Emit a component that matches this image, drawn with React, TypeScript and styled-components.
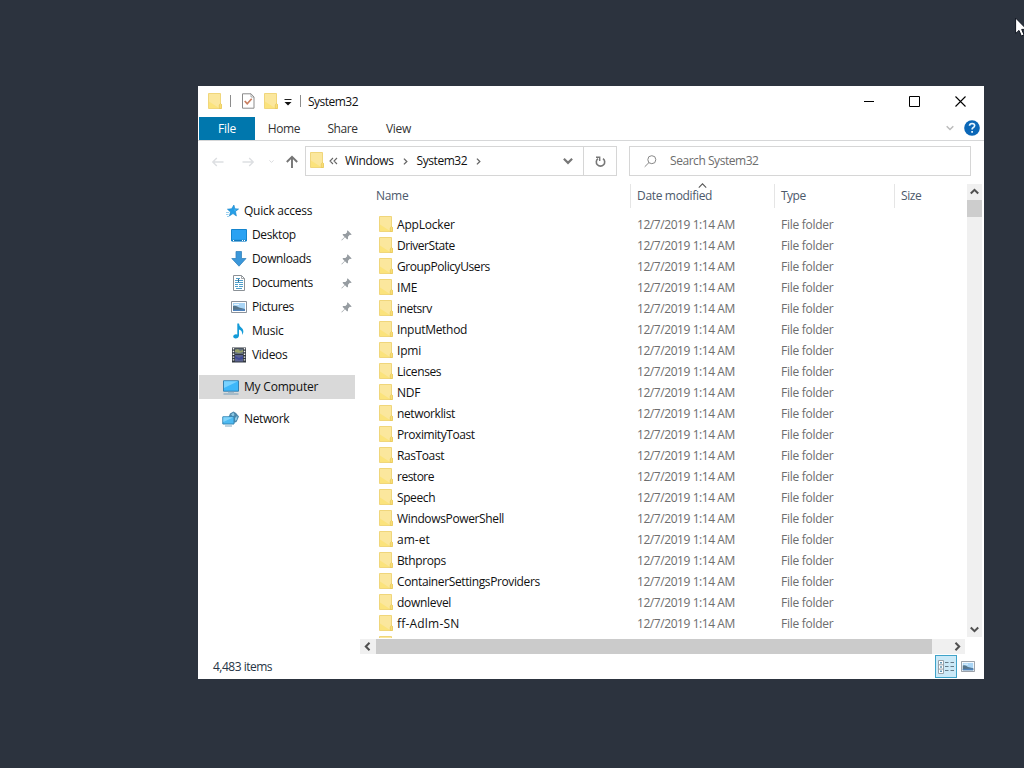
import React from "react";
import styled, { createGlobalStyle } from "styled-components";

const GlobalStyle = createGlobalStyle`
  * { box-sizing: border-box; }
  body { margin: 0; background: #2c333e; }
  svg { display: block; flex: none; }
`;

const Desktop = styled.main`
  position: relative;
  width: 1024px;
  height: 768px;
  padding: 86px 40px 89px 198px;
  overflow: hidden;
  background: #2c333e;
  font: 12px/16px "Open Sans", "Noto Sans", sans-serif;
  color: #111;
  cursor: default;
`;

const Window = styled.section`
  height: 593px;
  display: flex;
  flex-direction: column;
  background: #fff;
`;

const Label = styled.span<{ $track?: number }>`
  white-space: pre;
  letter-spacing: ${(p) => p.$track ?? -0.2}px;
`;

const TitleBar = styled.header`
  height: 31px;
  display: flex;
  align-items: center;
  padding-left: 10px;
`;

const QuickTools = styled.div`
  display: flex;
  align-items: center;
  width: 100px;
  height: 30px;
  align-self: flex-start;
`;

const Separator = styled.i<{ $before: number; $after: number }>`
  width: 1px;
  height: 12px;
  margin: 0 ${(p) => p.$after}px 0 ${(p) => p.$before}px;
  background: #8c8c8c;
`;

const WindowControls = styled.div`
  display: flex;
  margin-left: auto;
`;

const ControlButton = styled.button<{ $width: number }>`
  width: ${(p) => p.$width}px;
  height: 31px;
  display: flex;
  align-items: center;
  padding: 0 0 0 17px;
  border: 0;
  background: none;
`;

const TabBar = styled.nav`
  height: 24px;
  display: flex;
  padding: 0 0 0 1px;
  border-bottom: 1px solid #d6d7d8;
  color: #333;
`;

const Tab = styled.div<{ $width: number; $active?: boolean }>`
  width: ${(p) => p.$width}px;
  display: flex;
  align-items: center;
  justify-content: center;
  padding-top: 1px;
  background: ${(p) => (p.$active ? "#0077ad" : "transparent")};
  color: ${(p) => (p.$active ? "#fff" : "#333")};
`;

const TabTools = styled.div`
  height: 22px;
  margin-left: auto;
  display: flex;
  align-items: center;
  gap: 10px;
  padding-right: 4px;
`;

const NavigationBar = styled.div`
  height: 41px;
  display: flex;
  align-items: flex-start;
  padding: 5px 13px 0 0;
`;

const HistoryButtons = styled.div`
  width: 107px;
  height: 31px;
  display: flex;
  align-items: center;
  padding-left: 13px;
`;

const Address = styled.div`
  width: 312px;
  height: 30px;
  display: flex;
  align-items: center;
  border: 1px solid #d6d6d6;
  padding-left: 4px;
`;

const Crumbs = styled.div`
  flex: 1;
  display: flex;
  align-items: center;
`;

const AddressFolder = styled.span`
  margin-top: -2px;
`;

const Gap = styled.span<{ $size: number }>`
  flex: none;
  width: ${(p) => p.$size}px;
`;

const Refresh = styled.div`
  width: 33px;
  height: 28px;
  display: grid;
  place-items: center;
  border-left: 1px solid #d6d6d6;
`;

const Search = styled.div`
  width: 342px;
  height: 30px;
  display: flex;
  align-items: center;
  gap: 13px;
  margin-left: 12px;
  padding-left: 14px;
  border: 1px solid #d6d6d6;
  color: #6d6d6d;
`;

const Body = styled.div`
  height: 472px;
  display: flex;
`;

const Sidebar = styled.aside`
  width: 162px;
  padding: 17px 5px 0 1px;
`;

const SideRow = styled.div<{ $indent: number; $selected?: boolean; $space?: number }>`
  height: 24px;
  display: flex;
  align-items: center;
  margin-top: ${(p) => p.$space ?? 0}px;
  padding-left: ${(p) => p.$indent}px;
  background: ${(p) => (p.$selected ? "#d9d9d9" : "transparent")};
`;

const SideIcon = styled.span<{ $width: number }>`
  width: ${(p) => p.$width}px;
`;

const PinSlot = styled.span`
  margin-left: auto;
  padding-right: 3px;
`;

const Content = styled.section`
  width: 624px;
  height: 472px;
  display: flex;
  flex-direction: column;
`;

const ListArea = styled.div`
  height: 457px;
  display: flex;
`;

const FileList = styled.div`
  width: 607px;
  height: 456px;
  overflow: hidden;
`;

const columns = "270px 144px 120px 73px";

const ColumnHeader = styled.div`
  height: 32px;
  display: grid;
  grid-template-columns: ${columns};
  padding: 2px 0 6px;
  color: #4c596b;
`;

const ColumnTitle = styled.div<{ $first?: boolean }>`
  position: relative;
  display: flex;
  align-items: center;
  padding-left: ${(p) => (p.$first ? 16 : 6)}px;
  border-left: ${(p) => (p.$first ? "0" : "1px solid #e5e5e5")};
`;

const SortMark = styled.span`
  position: absolute;
  left: 67px;
  top: -3px;
`;

const FileRow = styled.div`
  height: 21px;
  display: grid;
  grid-template-columns: ${columns};
  align-items: center;
  color: #6d6d6d;
`;

const FileName = styled.div`
  display: flex;
  align-items: center;
  gap: 4px;
  padding-left: 19px;
  color: #111;

  svg {
    margin-top: -1px;
  }
`;

const Cell = styled.div`
  padding-left: 7px;
`;

const VerticalScroll = styled.div`
  width: 15px;
  height: 453px;
  margin-top: 2px;
  display: flex;
  flex-direction: column;
  align-items: center;
  justify-content: space-between;
  background: #f0f0f0;
`;

const ScrollArrow = styled.div`
  width: 15px;
  height: 15px;
  display: grid;
  place-items: center;
`;

const VerticalThumb = styled.div`
  width: 15px;
  height: 17px;
  margin-top: 1px;
  margin-bottom: auto;
  background: #cdcdcd;
`;

const HorizontalScroll = styled.div`
  width: 605px;
  height: 15px;
  display: flex;
  background: #f0f0f0;
`;

const HorizontalThumb = styled.div`
  width: 556px;
  margin: 0 auto 0 1px;
  background: #cbcbcb;
`;

const StatusBar = styled.footer`
  height: 25px;
  display: flex;
  align-items: center;
  padding-left: 15px;
  color: #263445;
`;

const Views = styled.div`
  display: flex;
  align-items: center;
  gap: 4px;
  margin-left: auto;
  padding-right: 9px;
`;

const ViewButton = styled.div`
  width: 22px;
  height: 23px;
  display: grid;
  place-items: center;
  border: 1px solid #3fa3c9;
  background: #cbe9f7;
`;

const Pointer = styled.div`
  position: absolute;
  left: 1015px;
  top: 17px;
`;

const FolderIcon = () => (
  <svg width="14" height="16" viewBox="0 0 14 16">
    <path d="M.5 .5H12.5V10.5L13.3 11.3V15.5H.5Z" fill="#fbe79d" stroke="#f0d67b" />
    <path d="M1 15V8.5L11 15Z" fill="#fbe37c" />
    <path d="M11.3 15.5V12L12.5 10.4L13.4 11.4V15.5Z" fill="#fbe078" stroke="#e5c658" strokeWidth=".7" />
  </svg>
);

const Chevron = ({ dir, size = 8, color = "#555", weight = 1.5 }: { dir: "up" | "down" | "left" | "right"; size?: number; color?: string; weight?: number }) => {
  const turn = { down: 0, left: 90, up: 180, right: 270 }[dir];
  return (
    <svg width={size} height={size} viewBox="0 0 8 8">
      <path d="M.7 2.2L4 5.5L7.3 2.2" transform={`rotate(${turn} 4 4)`} fill="none" stroke={color} strokeWidth={weight} />
    </svg>
  );
};

const Arrow = ({ flip }: { flip?: boolean }) => (
  <svg width="14" height="12" viewBox="0 0 14 12">
    <path d="M1.8 6H12.5M5.8 2L1.8 6L5.8 10" transform={flip ? "rotate(180 7 6)" : undefined} fill="none" stroke="#dddfe2" strokeWidth="1.4" />
  </svg>
);

const PictureIcon = ({ width = 16, height = 12 }: { width?: number; height?: number }) => (
  <svg width={width} height={height} viewBox="0 0 16 12" preserveAspectRatio="none">
    <path d="M.5 .5H15.5V11.5H.5Z" fill="#fff" stroke="#8b929b" />
    <path d="M2 2H14V10H2Z" fill="#a9d5f6" />
    <path d="M2 5Q5 4 8 6.5L14 8V10H2Z" fill="#56758a" />
    <path d="M2 8.8L14 8.3V10H2Z" fill="#4f83bd" />
    <path d="M3 3.5H8" stroke="#e9f6ff" />
  </svg>
);

const PinIcon = () => (
  <svg width="11" height="11" viewBox="0 0 11 11">
    <path d="M6.6 .3L10.7 4.4L9.6 5L8.8 4.8L7 6.7L7 8.8L6.2 9.5L4 7.2L.8 10.5L.4 10.1L3.6 6.9L1.5 4.8L2.2 4L4.4 4L6.2 2.2L6 1.2Z" fill="#969ca1" />
  </svg>
);

const SidebarGlyph = ({ name }: { name: string }) => {
  switch (name) {
    case "Quick access":
      return (
        <svg width="14" height="14" viewBox="0 0 14 14">
          <path d="M7.9 1L8.9 4.8L12.6 5L9.5 7.4L10.4 12L7 9.6L3.4 12L4.5 8L1.4 5.2L5.6 4.7Z" fill="#249ee7" stroke="#1783c6" strokeWidth=".6" />
          <path d="M0 8.5H3M0 10.5H2.5M1 12.5H3" stroke="#7fc3ea" strokeWidth=".8" />
          <path d="M7.6 2.8L8.4 5.4L11 5.7L8.6 7" fill="#56bdf4" />
        </svg>
      );
    case "Desktop":
      return (
        <svg width="16" height="13" viewBox="0 0 16 13">
          <path d="M.5 .5H15.5V12H.5Z" fill="#2aa2f3" stroke="#1484cd" />
          <path d="M1 11.5H15" stroke="#1279bd" strokeWidth="1.4" />
          <path d="M2 11.5H3M11 11.5H12M13 11.5H14" stroke="#fff" />
        </svg>
      );
    case "Downloads":
      return (
        <svg width="16" height="16" viewBox="0 0 16 16">
          <path d="M5 .5H10.5V7.5H15L8 15.2L.8 7.5H5Z" fill="#3a97da" stroke="#3784bd" strokeWidth=".8" />
        </svg>
      );
    case "Documents":
      return (
        <svg width="16" height="16" viewBox="0 0 16 16">
          <path d="M2.5 .5H10.5L13.5 3.5V15.5H2.5Z" fill="#fff" stroke="#8b9196" />
          <path d="M10.5 .5V3.5H13.5" fill="none" stroke="#8b9196" strokeWidth=".8" />
          <path d="M5 3.5H9M4 5.5H7M8 5.5H12M4 7.5H12M4 9.5H7M8 9.5H12M4 11.5H7M8 11.5H12M5 13.5H11" stroke="#4f9fca" />
          <path d="M7.5 4V7" stroke="#3c6e8f" />
        </svg>
      );
    case "Pictures":
      return <PictureIcon />;
    case "Music":
      return (
        <svg width="16" height="16" viewBox="0 0 16 16">
          <path d="M6.3 .5H8Q8.2 3 10.2 4.5Q14 7.5 11.2 12Q11.5 7.4 8 6.5V12.5Q7.7 15.6 4.2 15.5Q1.8 15 2.3 12.8Q3.4 10.5 6.3 11.4Z" fill="#149bd8" />
        </svg>
      );
    case "Videos":
      return (
        <svg width="16" height="16" viewBox="0 0 16 16">
          <path d="M1 .5H15V15.5H1Z" fill="#333940" />
          <path d="M4 1.5H12V7H4Z" fill="#65717e" /><path d="M4 8H12V14.5H4Z" fill="#5a6291" />
          <path d="M4 3L7 2L9 4L12 3V5L8 6L4 5Z" fill="#97a269" />
          <path d="M4 9L8 11L12 9V12L8 13L4 11Z" fill="#3f4a98" />
          <path d="M2.5 1V15M13.5 1V15" stroke="#f4f4f4" strokeWidth="1.5" strokeDasharray="1.4 1.4" />
        </svg>
      );
    case "My Computer":
      return (
        <svg width="18" height="15" viewBox="0 0 18 15">
          <path d="M1.5 .8H16.5V11.2H1.5Z" fill="#3db7fa" stroke="#3581b1" />
          <path d="M2 1.3H16L2 8Z" fill="#79d2ff" />
          <path d="M6 12H12M1.5 14H16.5" stroke="#729cb8" />
        </svg>
      );
    default:
      return (
        <svg width="18" height="16" viewBox="0 0 18 16">
          <path d="M11.5 .5L14 2L17 5.5L14.5 11L11.5 12L6.5 6L8 2.5Z" fill="#4c87aa" />
          <path d="M9 3.5L11.5 1.5L12.5 4L11 5.5M13 7L15.5 4.5L15 8.5L13 10Z" fill="#8bc8e4" />
          <path d="M.8 5.8H12V13H.8Z" fill="#4dbaf2" stroke="#3586b4" />
          <path d="M1.3 6.3H11.5L1.3 11Z" fill="#83d4fa" />
          <path d="M3 15H10" stroke="#82a9bf" />
        </svg>
      );
  }
};

interface SideItem { name: string; pinned?: boolean; root?: boolean; selected?: boolean; space?: number; track?: number }
const sideItems: SideItem[] = [
  { name: "Quick access", root: true, track: -0.26 },
  { name: "Desktop", pinned: true, track: -0.35 },
  { name: "Downloads", pinned: true, track: -0.38 },
  { name: "Documents", pinned: true, track: -0.38 },
  { name: "Pictures", pinned: true, track: -0.38 },
  { name: "Music" },
  { name: "Videos", track: -0.3 },
  { name: "My Computer", root: true, selected: true, space: 8 },
  { name: "Network", root: true, space: 8, track: -0.38 },
];

const files: { name: string; track?: number }[] = [
  { name: "AppLocker", track: -0.2 },
  { name: "DriverState", track: -0.45 },
  { name: "GroupPolicyUsers", track: -0.42 },
  { name: "IME" },
  { name: "inetsrv", track: -0.45 },
  { name: "InputMethod", track: -0.3 },
  { name: "Ipmi" },
  { name: "Licenses", track: -0.4 },
  { name: "NDF" },
  { name: "networklist", track: -0.38 },
  { name: "ProximityToast", track: -0.42 },
  { name: "RasToast", track: -0.4 },
  { name: "restore", track: -0.5 },
  { name: "Speech", track: -0.4 },
  { name: "WindowsPowerShell", track: -0.36 },
  { name: "am-et", track: 0 },
  { name: "Bthprops", track: -0.4 },
  { name: "ContainerSettingsProviders", track: -0.38 },
  { name: "downlevel", track: -0.3 },
  { name: "ff-Adlm-SN", track: 0.2 },
];

export default function App() {
  return (
    <>
      <GlobalStyle />
      <Desktop>
        <Window>
          <TitleBar>
            <QuickTools>
              <FolderIcon />
              <Separator $before={8} $after={10} />
              <svg width="14" height="16" viewBox="0 0 14 16">
                <path d="M1.5 .8H10L13 4V15.2H1.5Z" fill="#fff" stroke="#8b8b8b" />
                <path d="M10 .8V4H13" fill="none" stroke="#8b8b8b" strokeWidth=".7" />
                <path d="M3.7 8L6.2 10.7L10.7 5.7" fill="none" stroke="#c97f61" strokeWidth="1.7" />
              </svg>
              <Gap $size={9} />
              <FolderIcon />
              <Gap $size={6} />
              <svg width="8" height="10" viewBox="0 0 8 10"><path d="M.5 3.5H7.5" stroke="#222" /><path d="M.5 6H7.5L4 9.5Z" fill="#111" /></svg>
              <Separator $before={8} $after={7} />
            </QuickTools>
            <Label $track={-0.52}>System32</Label>
            <WindowControls>
              <ControlButton $width={45} aria-label="Minimize"><svg width="11" height="11"><path d="M0 5.5H10" stroke="#000" /></svg></ControlButton>
              <ControlButton $width={46} aria-label="Maximize"><svg width="11" height="11"><path d="M.5 .5H10.5V10.5H.5Z" fill="none" stroke="#000" /></svg></ControlButton>
              <ControlButton $width={46} aria-label="Close"><svg width="11" height="11"><path d="M.5 .5L10.5 10.5M10.5 .5L.5 10.5" stroke="#000" strokeWidth="1.1" /></svg></ControlButton>
            </WindowControls>
          </TitleBar>
          <TabBar>
            <Tab $width={56} $active><Label>File</Label></Tab>
            <Tab $width={58}><Label $track={-0.4}>Home</Label></Tab>
            <Tab $width={59}><Label $track={-0.45}>Share</Label></Tab>
            <Tab $width={53}><Label $track={-0.25}>View</Label></Tab>
            <TabTools>
              <Chevron dir="down" color="#bbb" />
              <svg width="16" height="16" viewBox="0 0 16 16">
                <circle cx="8" cy="8" r="7.8" fill="#0b67b7" />
                <path d="M5.5 5.8Q5.7 3.5 8.1 3.5Q10.7 3.6 10.6 5.8Q10.5 7 9 7.8Q8.1 8.3 8.1 9.6" fill="none" stroke="#e8f6ff" strokeWidth="1.7" />
                <path d="M7.2 11H9V12.8H7.2Z" fill="#e8f6ff" />
              </svg>
            </TabTools>
          </TabBar>
          <NavigationBar>
            <HistoryButtons>
              <Arrow />
              <Gap $size={16} />
              <Arrow flip />
              <Gap $size={14} />
              <Chevron dir="down" size={5} color="#d7d9dc" />
              <Gap $size={11} />
              <svg width="14" height="13" viewBox="0 0 14 13"><path d="M7 13V1.8M1.8 7L7 1.8L12.2 7" fill="none" stroke="#757575" strokeWidth="1.9" /></svg>
            </HistoryButtons>
            <Address>
              <Crumbs>
                <AddressFolder><FolderIcon /></AddressFolder>
                <Gap $size={5} />
                <svg width="9" height="8" viewBox="0 0 9 8"><path d="M4 1L1 4L4 7M8 1L5 4L8 7" fill="none" stroke="#666" strokeWidth="1.1" /></svg>
                <Gap $size={7} />
                <Label $track={-0.35}>Windows</Label>
                <Gap $size={8} />
                <Chevron dir="right" size={7} color="#666" />
                <Gap $size={8} />
                <Label $track={-0.45}>System32</Label>
                <Gap $size={8} />
                <Chevron dir="right" size={7} color="#666" />
              </Crumbs>
              <Chevron dir="down" size={10} color="#777" weight={1.7} />
              <Gap $size={10} />
              <Refresh>
                <svg width="12" height="13" viewBox="0 0 12 13">
                  <path d="M8.5 3.1A4.2 4.2 0 1 1 3.5 3.1" transform="translate(.5 .5)" fill="none" stroke="#777" strokeWidth="1.6" />
                  <path d="M1.5 1.8H5.2V5.5" transform="translate(.5 .5)" fill="none" stroke="#777" strokeWidth="1.4" />
                </svg>
              </Refresh>
            </Address>
            <Search>
              <svg width="13" height="13" viewBox="0 0 13 13"><circle cx="7.8" cy="4.7" r="4" fill="none" stroke="#888" /><path d="M5 7.5L.7 11.8" stroke="#888" /></svg>
              <Label $track={-0.45}>Search System32</Label>
            </Search>
          </NavigationBar>
          <Body>
            <Sidebar>
              {sideItems.map((item) => (
                <SideRow key={item.name} $indent={item.name === "Quick access" ? 27 : item.root ? 23 : 32} $selected={item.selected} $space={item.space}>
                  <SideIcon $width={item.name === "Quick access" ? 18 : item.root ? 22 : 21}><SidebarGlyph name={item.name} /></SideIcon>
                  <Label $track={item.track}>{item.name}</Label>
                  {item.pinned && <PinSlot><PinIcon /></PinSlot>}
                </SideRow>
              ))}
            </Sidebar>
            <Content>
              <ListArea>
                <FileList>
                  <ColumnHeader>
                    <ColumnTitle $first><Label $track={-0.3}>Name</Label></ColumnTitle>
                    <ColumnTitle><SortMark><Chevron dir="up" weight={0.9} size={9} /></SortMark><Label $track={-0.33}>Date modified</Label></ColumnTitle>
                    <ColumnTitle><Label $track={-0.5}>Type</Label></ColumnTitle>
                    <ColumnTitle><Label $track={-0.4}>Size</Label></ColumnTitle>
                  </ColumnHeader>
                  {files.map((file) => (
                    <FileRow key={file.name}>
                      <FileName><FolderIcon /><Label $track={file.track}>{file.name}</Label></FileName>
                      <Cell><Label $track={-0.43}>12/7/2019 1:14 AM</Label></Cell>
                      <Cell><Label $track={-0.28}>File folder</Label></Cell>
                    </FileRow>
                  ))}
                  <FileRow><FileName><FolderIcon /></FileName></FileRow>
                </FileList>
                <VerticalScroll>
                  <ScrollArrow><Chevron dir="up" color="#505050" weight={1.8} size={9} /></ScrollArrow>
                  <VerticalThumb />
                  <ScrollArrow><Chevron dir="down" color="#505050" weight={1.8} size={9} /></ScrollArrow>
                </VerticalScroll>
              </ListArea>
              <HorizontalScroll>
                <ScrollArrow><Chevron dir="left" color="#505050" weight={1.8} size={9} /></ScrollArrow>
                <HorizontalThumb />
                <ScrollArrow><Chevron dir="right" color="#505050" weight={1.8} size={9} /></ScrollArrow>
              </HorizontalScroll>
            </Content>
          </Body>
          <StatusBar>
            <Label $track={-0.5}>4,483 items</Label>
            <Views>
              <ViewButton>
                <svg width="17" height="14" viewBox="0 0 17 14">
                  <path d="M.5 .5H5.5V13.5H.5ZM.5 4.8H5.5M.5 9.1H5.5" fill="#fff" stroke="#98a1a9" />
                  <path d="M2.2 2.7H3.8M2.2 7H3.8M2.2 11.3H3.8" stroke="#397a9e" strokeWidth="1.4" />
                  <path d="M7 2.5H10.5M12.5 2.5H16M7 6.5H10.5M12.5 6.5H16M7 10.5H10.5M12.5 10.5H16" stroke="#667b88" />
                </svg>
              </ViewButton>
              <PictureIcon width={14} height={11} />
            </Views>
          </StatusBar>
        </Window>
        <Pointer><svg width="13" height="21" viewBox="0 0 13 21"><path d="M.6 1V16.5L4 13.4L6.3 19L9 17.8L6.7 12.4H11.8Z" fill="#fff" stroke="#111722" /></svg></Pointer>
      </Desktop>
    </>
  );
}
